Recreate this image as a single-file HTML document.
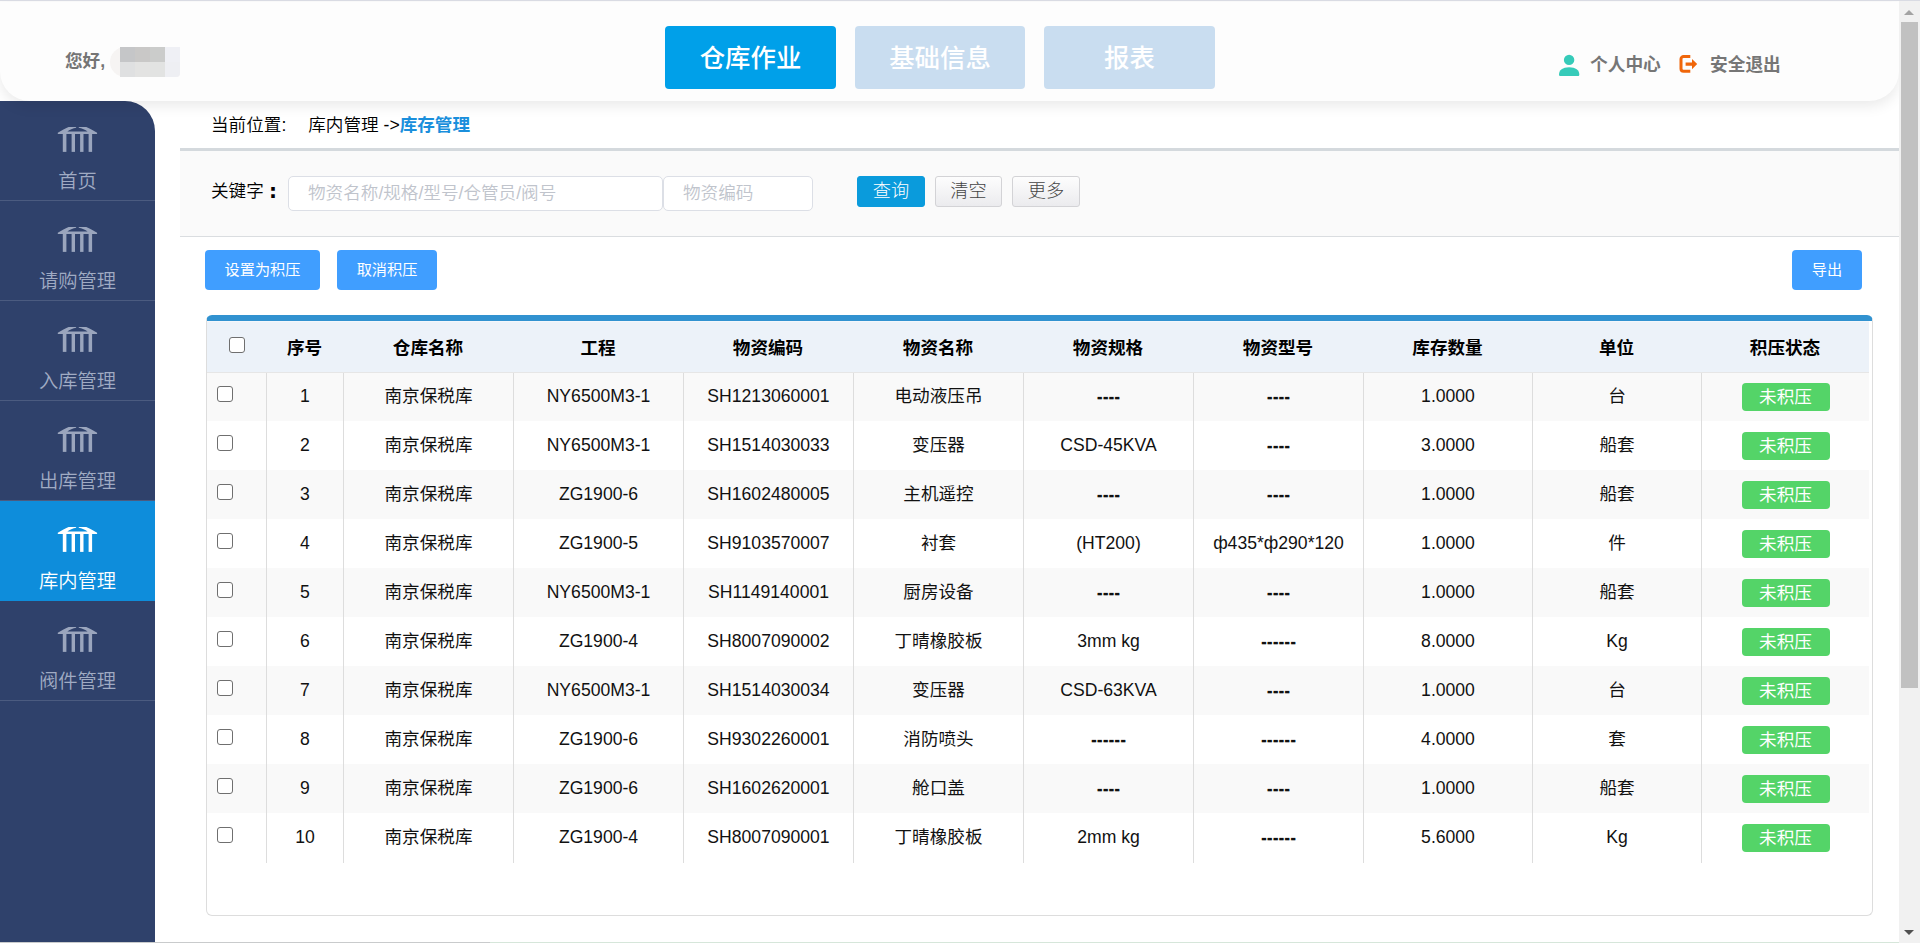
<!DOCTYPE html>
<html lang="zh-CN">
<head>
<meta charset="utf-8">
<title>库存管理</title>
<style>
*{box-sizing:border-box;margin:0;padding:0}
html,body{width:1920px;height:943px;overflow:hidden;background:#fff}
body{position:relative;font-family:"Liberation Sans","Noto Sans CJK SC",sans-serif;color:#000;font-size:17.6px}
.abs{position:absolute}
/* top hairline */
#topline{left:0;top:0;width:1920px;height:1px;background:#d9dbe3;z-index:10}
#hdrfill{left:0;top:1px;width:1899px;height:2px;background:#fdfdfd;z-index:5}
/* header */
#header{left:0;top:2px;width:1899px;height:99px;background:#fdfdfd;border-radius:0 0 30px 30px;box-shadow:0 5px 14px rgba(0,0,0,.085);z-index:5}
#hello{left:65px;top:48px;font-size:17.6px;font-weight:bold;color:#757575;line-height:24px;white-space:nowrap}
#mosaic{left:110px;top:47px;width:70px;height:30px;background:#f6f4f3;border-radius:15px 0 4px 15px}
#mosaic i{position:absolute;display:block}
.nav{top:24px;height:63px;width:171px;border-radius:4px;color:#fff;font-size:25.4px;font-weight:500;line-height:64px;text-align:center;background:#c9ddf0;overflow:hidden}
.nav.on{background:#00a0e9}
.hlink{top:51px;font-size:17.7px;font-weight:bold;color:#767676;line-height:24px;white-space:nowrap}
/* sidebar */
#side{left:0;top:101px;width:155px;height:842px;background:#2f416b;border-radius:0 30px 0 0;overflow:hidden;z-index:2}
.mi{position:relative;height:100px;border-bottom:1px solid #4b5b80;text-align:center;color:#a0abc3;font-size:19.3px}
.mi svg{position:absolute;left:57px;top:25px;width:41px;height:27px;color:#9aa5bd}
.mi.on svg{color:#fff}
.mi span{position:absolute;left:0;width:155px;top:66.5px;line-height:28px;font-weight:350}
.mi.on{background:#0e8ddb;color:#fff;border-bottom-color:#0e8ddb}
/* scrollbar */
#sb{left:1899px;top:0;width:21px;height:943px;background:#f1f1f1;z-index:9}
#sbthumb{left:2px;top:22px;width:17px;height:666px;background:#c1c1c1}
.arr{left:5px;width:0;height:0;border-left:5px solid transparent;border-right:5px solid transparent}
#botline{left:0;top:942px;width:1899px;height:1px;background:linear-gradient(90deg,#c9cbcc 0,#c9cbcc 490px,#d6e6da 490px,#d6e6da 100%);z-index:8}
/* content */
#crumb{left:211px;top:112px;font-weight:350;font-size:17.6px;line-height:26px;white-space:nowrap;color:#000}
#crumb b{color:#1a8fdc}
#crumbline{left:180px;top:148px;width:1719px;height:3px;background:#d4d9dd}
#search{left:180px;top:151px;width:1719px;height:86px;background:#fafafa;border-bottom:1px solid #dadde0}
#kw{left:211px;top:178px;font-weight:350;font-size:17.6px;line-height:26px;white-space:nowrap}
.inp{top:176px;height:35px;background:#fff;border:1px solid #dcdfe6;border-radius:5px;color:#c0c4cc;font-size:17.6px;line-height:33px;padding-left:19px;white-space:nowrap;font-weight:350}
.sbtn{top:176px;height:31px;width:68px;border-radius:3px;font-size:18.2px;line-height:28px;text-align:center;border:1px solid #d3d3d6;color:#444;background:linear-gradient(#fdfdfd,#ebebee);font-weight:300}
.sbtn.pri{background:#0a9bdc;border-color:#0a9bdc;color:#fff}
.abtn{top:250px;height:40px;border-radius:4px;background:#409eff;color:#fff;font-size:15.2px;line-height:40px;text-align:center}

/* table */
#tbox{left:206px;top:315px;width:1667px;height:601px;border:1px solid #ddd;border-top:6px solid #3192d0;border-radius:6px;background:#fff}
#tb{position:absolute;left:0;top:0;width:1662px;table-layout:fixed;border-collapse:separate;border-spacing:0}
#tb th{height:52px;background:#ecf2f9;border-top:1px solid #f4f7fb;font-size:17.6px;font-weight:bold;text-align:center;vertical-align:middle;border-bottom:1px solid #e6e6e6;color:#000}
#tb td{height:49px;font-size:17.6px;text-align:center;vertical-align:middle;border-left:1px solid #ddd;white-space:nowrap;color:#111}
#tb td.c0{border-left:none;text-align:left;padding-left:10px}
#tb tbody tr:nth-child(odd) td{background:#f9f9f9}
#tb tbody tr:first-child td{height:48px;padding-bottom:1px}
#tb tbody tr:last-child td{height:50px;padding-bottom:1px}
#tb tbody tr:last-child td.z{padding-bottom:5px}
#tb td.z{padding-bottom:4px}
#tb td.d{padding-top:2px;text-shadow:0 1px 0 #111}
#tb tbody tr:first-child td.z{padding-bottom:5px}
#tb th{padding-bottom:2px}
.cb{display:inline-block;width:16px;height:16px;border:1px solid #6f6f6f;border-radius:3px;background:#fff;vertical-align:middle;position:relative;top:-3.5px}
.tag{display:inline-block;width:88px;height:28px;line-height:28px;border-radius:4px;background:#54d468;color:#fff;font-size:17.6px;font-weight:400;position:relative;top:0}
</style>
</head>
<body>
<div id="topline" class="abs"></div>
<div id="hdrfill" class="abs"></div>

<div id="header" class="abs">
  <div id="hello" class="abs" style="top:47px">您好,</div>
  <div id="mosaic" class="abs" style="top:45px">
    <i style="left:10px;top:0;width:15px;height:15px;background:#c5c6c8"></i>
    <i style="left:25px;top:0;width:15px;height:15px;background:#c9c8c7"></i>
    <i style="left:40px;top:0;width:15px;height:15px;background:#cbcccb"></i>
    <i style="left:55px;top:0;width:15px;height:15px;background:#eff0f5"></i>
    <i style="left:10px;top:15px;width:15px;height:15px;background:#dfe0e1"></i>
    <i style="left:25px;top:15px;width:15px;height:15px;background:#e3e3e2"></i>
    <i style="left:40px;top:15px;width:15px;height:15px;background:#e2e3e2"></i>
    <i style="left:55px;top:15px;width:15px;height:15px;background:#eeeff3;border-radius:0 0 4px 0"></i>
  </div>
  <div class="abs nav on" style="left:665px">仓库作业</div>
  <div class="abs nav" style="left:855px;width:170px">基础信息</div>
  <div class="abs nav" style="left:1044px">报表</div>

  <svg class="abs" style="left:1558px;top:52px" width="23" height="24" viewBox="0 0 23 24"><circle cx="11.1" cy="5.9" r="5.2" fill="#36cbb9"/><path d="M1 20.6 C1 16 4.6 13.2 11.1 13.2 C17.7 13.2 21.3 16 21.3 20.6 C21.3 21.6 20.8 22.1 19.8 22.1 L2.5 22.1 C1.5 22.1 1 21.6 1 20.6 Z" fill="#36cbb9"/></svg>
  <div class="abs hlink" style="left:1590px">个人中心</div>
  <svg class="abs" style="left:1679px;top:52px" width="20" height="21" viewBox="0 0 20 21"><path d="M11.3 2.5 H4.6 a2.6 2.6 0 0 0 -2.6 2.6 V14.7 a2.6 2.6 0 0 0 2.6 2.6 H11.3" fill="none" stroke="#f0660a" stroke-width="3"/><path d="M6.6 8.4 H13 V5 L18.2 10.1 L13 15.2 V11.8 H6.6 Z" fill="#f0660a"/></svg>
  <div class="abs hlink" style="left:1710px">安全退出</div>
</div>

<div id="side" class="abs">
  <div class="mi"><svg viewBox="0 0 41 27"><use href="#bank"/></svg><span>首页</span></div>
  <div class="mi"><svg viewBox="0 0 41 27"><use href="#bank"/></svg><span>请购管理</span></div>
  <div class="mi"><svg viewBox="0 0 41 27"><use href="#bank"/></svg><span>入库管理</span></div>
  <div class="mi"><svg viewBox="0 0 41 27"><use href="#bank"/></svg><span>出库管理</span></div>
  <div class="mi on"><svg viewBox="0 0 41 27"><use href="#bank"/></svg><span>库内管理</span></div>
  <div class="mi"><svg viewBox="0 0 41 27"><use href="#bank"/></svg><span>阀件管理</span></div>
</div>
<svg width="0" height="0" style="position:absolute"><defs>
  <g id="bank" fill="currentColor">
    <path d="M0.8 8.1 V6.8 L6 3.7 Q9 2.1 11.6 1 L18.8 1 L19.4 1.7 C15.8 2.3 12.6 3.7 10.3 5.6 H30.6 C28.3 3.7 25.1 2.3 21.5 1.7 L22.1 1 L29.3 1 Q31.9 2.1 34.9 3.7 L40.1 6.8 V8.1 Z"/>
    <rect x="5.8" y="8" width="3.6" height="17.9"/><rect x="14.6" y="8" width="3.4" height="17.9"/><rect x="23.1" y="8" width="3.4" height="17.9"/><rect x="31.6" y="8" width="3.5" height="17.9"/>
  </g>
</defs></svg>

<div id="crumb" class="abs">当前位置:<span style="display:inline-block;width:22px"></span>库内管理 -&gt;<b>库存管理</b></div>
<div id="crumbline" class="abs"></div>
<div id="search" class="abs"></div>
<div id="kw" class="abs">关键字<b style="position:absolute;left:58px;top:1px;font-family:'DejaVu Sans',sans-serif;font-size:20px;line-height:24px">:</b></div>
<div class="abs inp" style="left:288px;width:375px">物资名称/规格/型号/仓管员/阀号</div>
<div class="abs inp" style="left:663px;width:150px">物资编码</div>
<div class="abs sbtn pri" style="left:857px">查询</div>
<div class="abs sbtn" style="left:935px;width:67px">清空</div>
<div class="abs sbtn" style="left:1012px">更多</div>

<div class="abs abtn" style="left:205px;width:115px">设置为积压</div>
<div class="abs abtn" style="left:337px;width:100px">取消积压</div>
<div class="abs abtn" style="left:1792px;width:70px">导出</div>

<div id="tbox" class="abs">
<table id="tb" cellspacing="0" cellpadding="0">
<colgroup><col style="width:59px"><col style="width:77px"><col style="width:170px"><col style="width:170px"><col style="width:170px"><col style="width:170px"><col style="width:170px"><col style="width:170px"><col style="width:169px"><col style="width:169px"><col style="width:168px"></colgroup>
<thead><tr><th><span class="cb" style="margin-left:1px;top:-2px"></span></th><th>序号</th><th>仓库名称</th><th>工程</th><th>物资编码</th><th>物资名称</th><th>物资规格</th><th>物资型号</th><th>库存数量</th><th>单位</th><th>积压状态</th></tr></thead>
<tbody>
<tr><td class="c0"><span class="cb"></span></td><td>1</td><td class="z">南京保税库</td><td>NY6500M3-1</td><td>SH1213060001</td><td class="z">电动液压吊</td><td class="d">----</td><td class="d">----</td><td>1.0000</td><td class="z">台</td><td><span class="tag">未积压</span></td></tr>
<tr><td class="c0"><span class="cb"></span></td><td>2</td><td class="z">南京保税库</td><td>NY6500M3-1</td><td>SH1514030033</td><td class="z">变压器</td><td>CSD-45KVA</td><td class="d">----</td><td>3.0000</td><td class="z">船套</td><td><span class="tag">未积压</span></td></tr>
<tr><td class="c0"><span class="cb"></span></td><td>3</td><td class="z">南京保税库</td><td>ZG1900-6</td><td>SH1602480005</td><td class="z">主机遥控</td><td class="d">----</td><td class="d">----</td><td>1.0000</td><td class="z">船套</td><td><span class="tag">未积压</span></td></tr>
<tr><td class="c0"><span class="cb"></span></td><td>4</td><td class="z">南京保税库</td><td>ZG1900-5</td><td>SH9103570007</td><td class="z">衬套</td><td>(HT200)</td><td>ф435*ф290*120</td><td>1.0000</td><td class="z">件</td><td><span class="tag">未积压</span></td></tr>
<tr><td class="c0"><span class="cb"></span></td><td>5</td><td class="z">南京保税库</td><td>NY6500M3-1</td><td>SH1149140001</td><td class="z">厨房设备</td><td class="d">----</td><td class="d">----</td><td>1.0000</td><td class="z">船套</td><td><span class="tag">未积压</span></td></tr>
<tr><td class="c0"><span class="cb"></span></td><td>6</td><td class="z">南京保税库</td><td>ZG1900-4</td><td>SH8007090002</td><td class="z">丁晴橡胶板</td><td>3mm kg</td><td class="d">------</td><td>8.0000</td><td>Kg</td><td><span class="tag">未积压</span></td></tr>
<tr><td class="c0"><span class="cb"></span></td><td>7</td><td class="z">南京保税库</td><td>NY6500M3-1</td><td>SH1514030034</td><td class="z">变压器</td><td>CSD-63KVA</td><td class="d">----</td><td>1.0000</td><td class="z">台</td><td><span class="tag">未积压</span></td></tr>
<tr><td class="c0"><span class="cb"></span></td><td>8</td><td class="z">南京保税库</td><td>ZG1900-6</td><td>SH9302260001</td><td class="z">消防喷头</td><td class="d">------</td><td class="d">------</td><td>4.0000</td><td class="z">套</td><td><span class="tag">未积压</span></td></tr>
<tr><td class="c0"><span class="cb"></span></td><td>9</td><td class="z">南京保税库</td><td>ZG1900-6</td><td>SH1602620001</td><td class="z">舱口盖</td><td class="d">----</td><td class="d">----</td><td>1.0000</td><td class="z">船套</td><td><span class="tag">未积压</span></td></tr>
<tr><td class="c0"><span class="cb"></span></td><td>10</td><td class="z">南京保税库</td><td>ZG1900-4</td><td>SH8007090001</td><td class="z">丁晴橡胶板</td><td>2mm kg</td><td class="d">------</td><td>5.6000</td><td>Kg</td><td><span class="tag">未积压</span></td></tr>
</tbody></table></div>

<div id="sb" class="abs">
  <div class="abs arr" style="top:10px;border-bottom:5px solid #a3a3a3"></div>
  <div id="sbthumb" class="abs"></div>
  <div class="abs arr" style="top:930px;border-top:5px solid #505050"></div>
</div>
<div id="botline" class="abs"></div>
</body>
</html>
